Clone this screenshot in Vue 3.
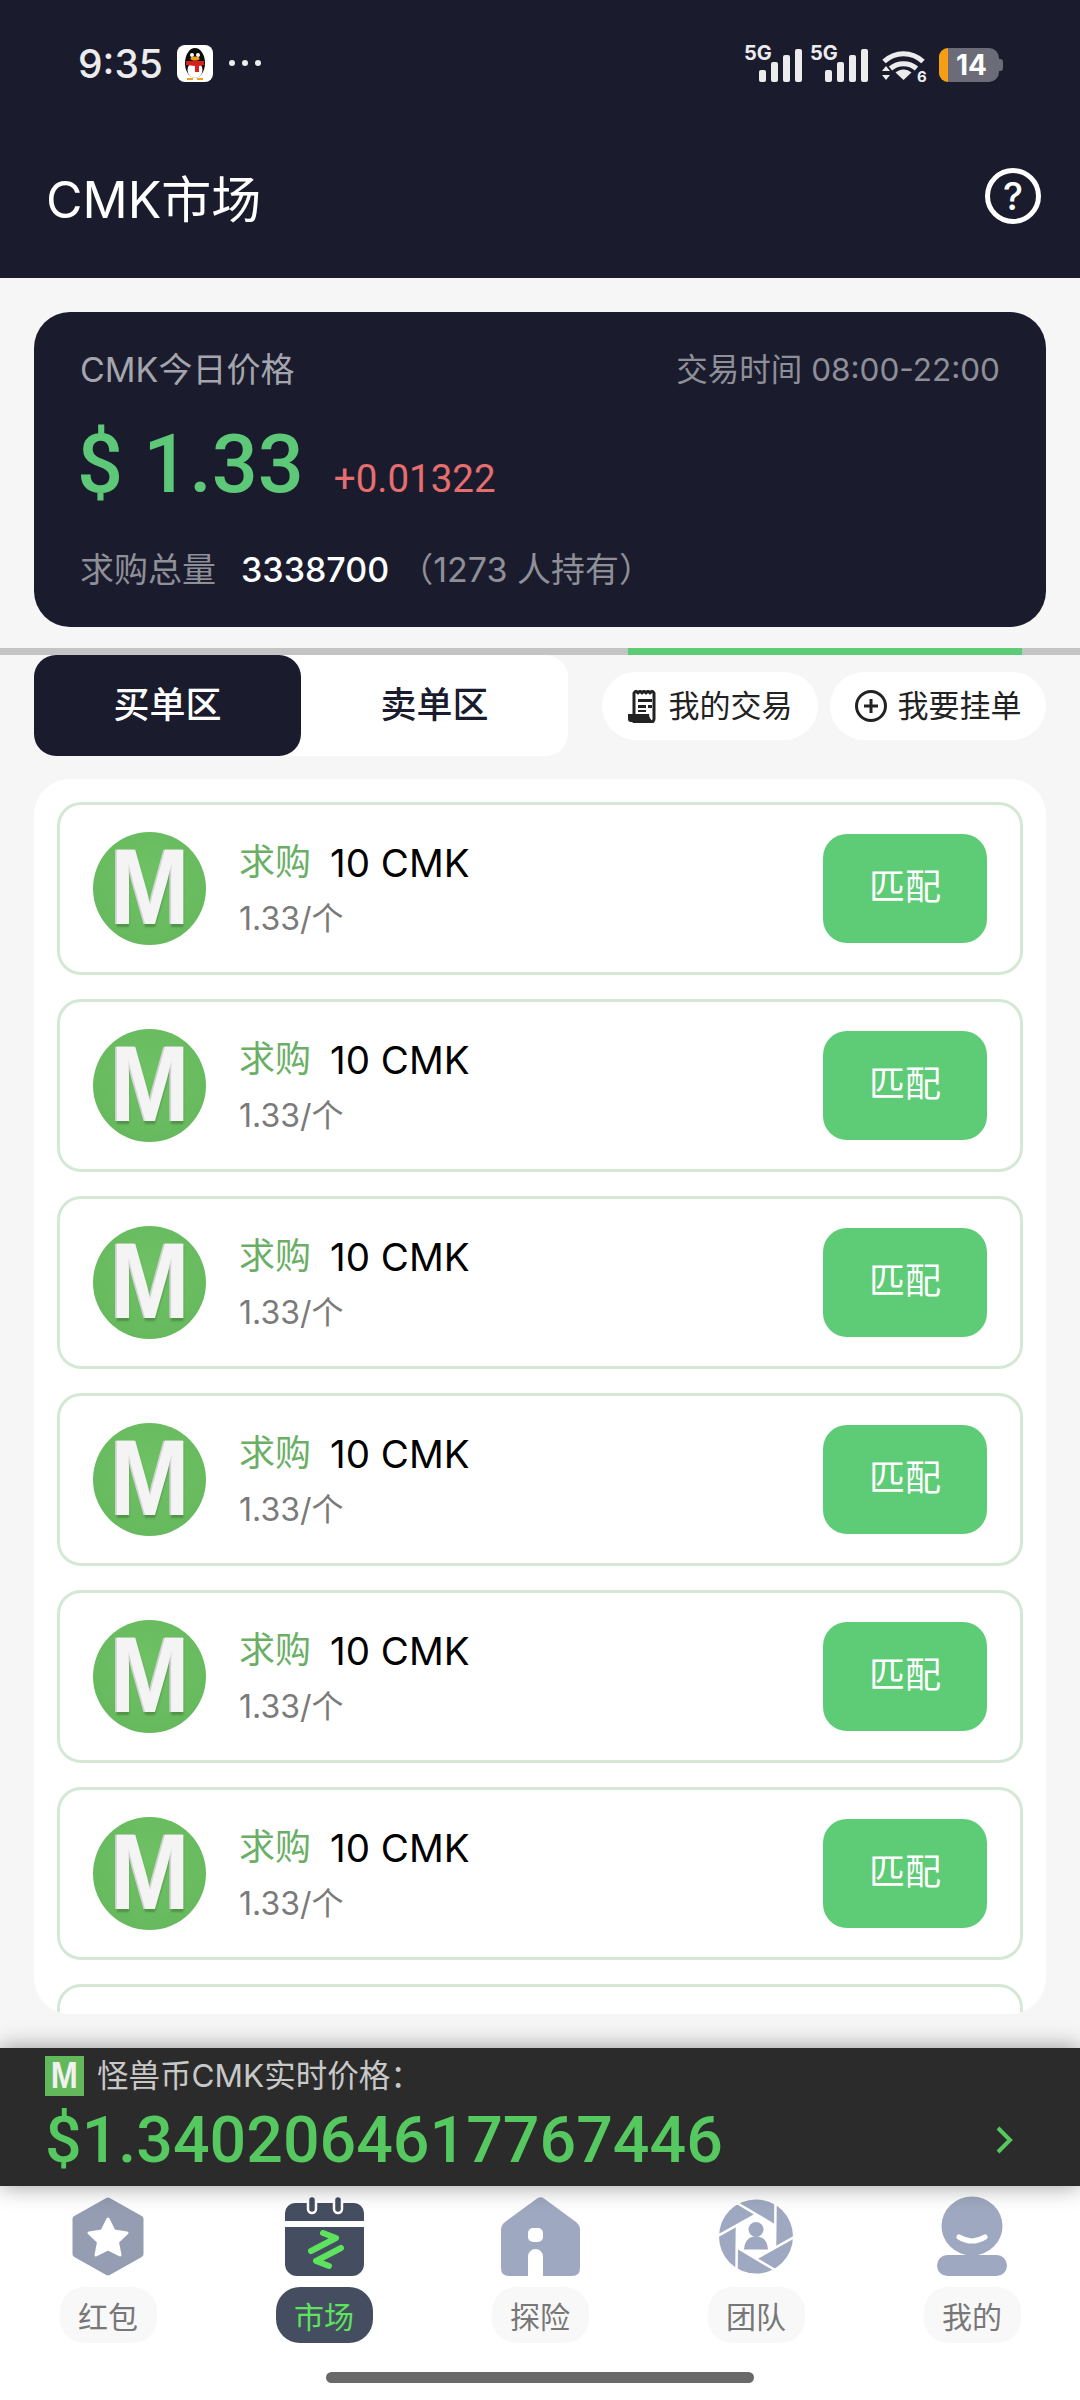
<script setup>
const orders = [1, 2, 3, 4, 5, 6, 7]
const tabs = [
  { key: 'packet', label: '红包' },
  { key: 'market', label: '市场', active: true },
  { key: 'explore', label: '探险' },
  { key: 'team', label: '团队' },
  { key: 'mine', label: '我的' },
]
const blades = [0, 60, 120, 180, 240, 300]
</script>

<template>
  <div class="page">
    <header class="header">
      <div class="status">
        <div class="status-left">
          <span class="time">9:35</span>
          <svg class="qq" viewBox="0 0 36 37">
            <rect width="36" height="37" rx="8" fill="#fff" />
            <ellipse cx="18" cy="18" rx="10" ry="15" fill="#0b0b0b" />
            <ellipse cx="18" cy="25" rx="7.500" ry="8" fill="#fff" />
            <circle cx="15" cy="10" r="2" fill="#fff" />
            <circle cx="21" cy="10" r="2" fill="#fff" />
            <ellipse cx="18" cy="13.500" rx="4.500" ry="2" fill="#f0a018" />
            <path d="M9 16h18v4l-5 1v6h-4v-6l-9-1z" fill="#d8201c" />
            <path d="M10 33h6v2h-6zM20 33h6v2h-6z" fill="#f0a018" />
          </svg>
          <span class="dots"><i></i><i></i><i></i></span>
        </div>
        <div class="status-right">
          <div v-for="n in 2" :key="n" class="signal">
            <span class="five-g">5G</span>
            <span class="bars"><i></i><i></i><i></i><i></i></span>
          </div>
          <svg class="wifi" viewBox="0 0 45 32">
            <path d="M3 11.500C14 1 31 1 42 11.500" fill="none" stroke="#ececec" stroke-width="5" />
            <path d="M9.500 18.500C17 12 28 12 35.500 18.500" fill="none" stroke="#ececec" stroke-width="5" />
            <path d="M14.500 22.500C19.500 18.500 25.500 18.500 30.500 22.500L22.500 30z" fill="#ececec" />
            <path d="M4 20l4-5 4 5zM4 24h8l-4 5z" fill="#ececec" transform="translate(-3 1)" />
            <text x="36" y="32" class="wifi-six">6</text>
          </svg>
          <div class="battery">
            <span class="battery-level"></span>
            <span class="battery-num">14</span>
            <span class="battery-cap"></span>
          </div>
        </div>
      </div>
      <div class="title-row">
        <h1 class="title">CMK市场</h1>
        <span class="help">?</span>
      </div>
    </header>

    <main class="content">
      <section class="price-card">
        <div class="price-top">
          <span>CMK今日价格</span>
          <span class="trade-time">交易时间 08:00-22:00</span>
        </div>
        <div class="price-main">
          <span class="price">$ 1.33</span>
          <span class="delta">+0.01322</span>
        </div>
        <div class="price-foot">
          <span>求购总量</span>
          <b>3338700</b>
          <span class="holders">（1273 人持有）</span>
        </div>
      </section>

      <div class="progress"><span class="progress-on"></span></div>

      <div class="actions">
        <div class="switch">
          <span class="switch-item on">买单区</span>
          <span class="switch-item">卖单区</span>
        </div>
        <div class="pills">
          <span class="pill">
            <svg class="pill-icon" viewBox="0 0 30 33">
              <path d="M6 3l2-2 2 2 2-2 2 2 2-2 2 2 2-2 2 2 2-2 2 2v26a3 3 0 0 1-3 3H6z" fill="none" stroke="#222" stroke-width="3" stroke-linejoin="round" />
              <path d="M10 9h14v3H10zM10 15h8v3h-8zM20 15h4v3h-4zM10 20h8v2h-8z" fill="#222" />
              <path d="M0 24h21c0 4 2 6 5 8H3a3 3 0 0 1-3-3z" fill="#222" />
            </svg>
            <span class="pill-text">我的交易</span>
          </span>
          <span class="pill">
            <svg class="pill-icon plus" viewBox="0 0 32 32">
              <circle cx="16" cy="16" r="14.500" fill="none" stroke="#222" stroke-width="3" />
              <path d="M16 9v14M9 16h14" stroke="#222" stroke-width="3" />
            </svg>
            <span class="pill-text">我要挂单</span>
          </span>
        </div>
      </div>

      <section class="list">
        <div v-for="o in orders" :key="o" class="order">
          <div class="avatar"><span v-if="o < 7" class="avatar-m">M</span></div>
          <template v-if="o < 7">
            <div class="order-info">
              <div class="order-line">
                <span class="order-type">求购</span>
                <span class="order-amount">10 CMK</span>
              </div>
              <div class="order-unit">1.33/个</div>
            </div>
            <span class="match">匹配</span>
          </template>
        </div>
      </section>
    </main>

    <section class="ticker">
      <div class="ticker-info">
        <div class="ticker-head">
          <span class="ticker-logo"><span class="ticker-m">M</span></span>
          <span>怪兽币CMK实时价格：</span>
        </div>
        <div class="ticker-price">$1.3402064617767446</div>
      </div>
      <svg class="chevron" viewBox="0 0 19 28">
        <path d="M3 2l12 12L3 26" fill="none" stroke="#55c860" stroke-width="4" />
      </svg>
    </section>

    <nav class="tabbar">
      <div class="tabs">
        <div v-for="t in tabs" :key="t.key" class="tab">
          <div class="tab-icon">
            <svg v-if="t.key === 'packet'" width="72" height="79" viewBox="0 0 72 79">
              <path d="M36 4L68 22V57L36 75L4 57V22Z" fill="#959db3" stroke="#959db3" stroke-width="7" stroke-linejoin="round" />
              <path d="M36 22L42 34L55 36L45.500 45L48 58L36 52L24 58L26.500 45L17 36L30 34Z" fill="#fff" stroke="#fff" stroke-width="3" stroke-linejoin="round" />
            </svg>
            <svg v-else-if="t.key === 'market'" width="79" height="79" viewBox="0 0 79 79">
              <path d="M10 6H69a10 10 0 0 1 10 10v8H0v-8A10 10 0 0 1 10 6z" fill="#454d60" />
              <path d="M0 30H79V67a12 12 0 0 1-12 12H12A12 12 0 0 1 0 67z" fill="#454d60" />
              <rect x="23" y="-1" width="8" height="17" rx="4" fill="#454d60" stroke="#fff" stroke-width="2.500" />
              <rect x="49" y="-1" width="8" height="17" rx="4" fill="#454d60" stroke="#fff" stroke-width="2.500" />
              <path d="M26 54L51 41L38 36M56 51L31 64L44 69" fill="none" stroke="#5de35d" stroke-width="6" stroke-linecap="round" stroke-linejoin="round" />
            </svg>
            <svg v-else-if="t.key === 'explore'" width="79" height="79" viewBox="0 0 79 79">
              <path d="M36 1.500Q39.500 -1 43 1.500L75 25Q79 28 79 33V71Q79 79 71 79H8Q0 79 0 71V33Q0 28 4 25Z" fill="#9ea8c0" />
              <rect x="27" y="31" width="15" height="14" rx="5" fill="#fff" />
              <path d="M27 79V59.500a7.500 7.500 0 0 1 15 0V79z" fill="#fff" />
            </svg>
            <svg v-else-if="t.key === 'team'" width="76" height="79" viewBox="-38 -39.500 76 79">
              <circle r="37" fill="#9ea8c0" />
              <polygon points="0,-22 19,-11 19,11 0,22 -19,11 -19,-11" fill="#fff" />
              <line v-for="b in blades" :key="b" x1="19" y1="-11" x2="-19" y2="-33.500" stroke="#fff" stroke-width="2.500" :transform="`rotate(${b})`" />
              <circle cy="-7" r="7.500" fill="#9ea8c0" />
              <path d="M-12 13Q-11 0 0 0Q11 0 12 13z" fill="#9ea8c0" />
            </svg>
            <svg v-else width="70" height="79" viewBox="0 0 70 79">
              <ellipse cx="35" cy="29" rx="30.500" ry="29.500" fill="#9ea8c0" />
              <rect x="0" y="58" width="70" height="21" rx="10.500" fill="#9ea8c0" />
              <path d="M22 40Q35 48 48 40" fill="none" stroke="#fff" stroke-width="5" stroke-linecap="round" />
            </svg>
          </div>
          <span class="tab-label" :class="{ on: t.active }">{{ t.label }}</span>
        </div>
      </div>
      <div class="home-bar"></div>
    </nav>
  </div>
</template>

<style scoped>
.page {
  width: 1080px;
  height: 2400px;
  display: flex;
  flex-direction: column;
  overflow: hidden;
  background: #f6f6f6;
  font-family: Inter, "Noto Sans CJK SC", sans-serif;
}

.header {
  height: 278px;
  flex: none;
  background: #1a1c2e;
  color: #fff;
  box-sizing: border-box;
}

.status {
  height: 126px;
  box-sizing: border-box;
  padding: 0 81px 0 78px;
  display: flex;
  justify-content: space-between;
  align-items: center;
}

.status-left {
  display: flex;
  align-items: center;
}

.time {
  width: 99px;
  font-size: 39px;
  font-weight: 500;
  color: #ececec;
}

.qq {
  width: 36px;
  height: 37px;
}

.dots {
  display: flex;
  gap: 7px;
  margin-left: 16px;
}

.dots i {
  width: 6px;
  height: 6px;
  border-radius: 50%;
  background: #ececec;
}

.status-right {
  display: flex;
  align-items: flex-end;
  height: 37px;
}

.signal {
  position: relative;
  width: 66px;
  height: 37px;
}

.five-g {
  position: absolute;
  left: 0;
  top: -4px;
  font-size: 20px;
  line-height: 24px;
  font-weight: 700;
  color: #ececec;
}

.bars {
  position: absolute;
  left: 15px;
  bottom: 0;
  display: flex;
  align-items: flex-end;
  gap: 5px;
}

.bars i {
  width: 7px;
  background: #ececec;
  border-radius: 2px;
}

.bars i:nth-child(1) { height: 12px; }
.bars i:nth-child(2) { height: 20px; }
.bars i:nth-child(3) { height: 27px; }
.bars i:nth-child(4) { height: 33px; }

.wifi {
  width: 45px;
  height: 32px;
  margin-left: 5px;
  overflow: visible;
}

.wifi-six {
  font-size: 15px;
  font-weight: 700;
  fill: #ececec;
}

.battery {
  position: relative;
  width: 60px;
  height: 34px;
  margin-left: 13px;
  background: #6c6c78;
  border-radius: 10px;
  display: flex;
  align-items: center;
  justify-content: center;
}

.battery-level {
  position: absolute;
  left: 0;
  top: 0;
  bottom: 0;
  width: 9px;
  background: #f59e12;
  border-radius: 10px 0 0 10px;
}

.battery-num {
  font-size: 28px;
  font-weight: 700;
  color: #fff;
  margin-left: 5px;
}

.battery-cap {
  position: absolute;
  right: -4px;
  top: 11px;
  width: 4px;
  height: 12px;
  background: #6c6c78;
  border-radius: 0 3px 3px 0;
}

.title-row {
  display: flex;
  justify-content: space-between;
  align-items: center;
  padding: 0 39px 0 46px;
  height: 146px;
}

.title {
  margin: 0 0 6px;
  font-size: 50px;
  font-weight: 400;
}

.help {
  width: 56px;
  height: 56px;
  margin-bottom: 6px;
  box-sizing: border-box;
  border: 5px solid #fff;
  border-radius: 50%;
  display: flex;
  align-items: center;
  justify-content: center;
  font-size: 38px;
  font-weight: 500;
}

.content {
  flex: 1;
  min-height: 0;
  box-sizing: border-box;
  padding-top: 34px;
  overflow: hidden;
}

.price-card {
  margin: 0 34px;
  height: 315px;
  box-sizing: border-box;
  padding: 36px 46px 0;
  background: #1a1c2e;
  border-radius: 36px;
  color: #a5a5ad;
}

.price-top {
  display: flex;
  justify-content: space-between;
  align-items: center;
  font-size: 34px;
  line-height: 44px;
}

.trade-time {
  font-size: 31.5px;
  color: #8f8f98;
}

.price-main {
  display: flex;
  align-items: baseline;
  gap: 30px;
  height: 94px;
  margin-top: 26px;
  margin-left: -3px;
  font-family: Roboto, sans-serif;
}

.price {
  font-size: 81px;
  line-height: 94px;
  font-weight: 500;
  color: #5cc878;
}

.delta {
  font-size: 38.500px;
  color: #e66e6e;
}

.price-foot {
  margin-top: 36px;
  font-size: 34px;
  line-height: 44px;
  display: flex;
  align-items: center;
  color: #8f8f98;
}

.price-foot b {
  margin-left: 25px;
  font-weight: 500;
  color: #fff;
}

.holders {
  margin-left: 10px;
}

.progress {
  margin-top: 21px;
  height: 7px;
  background: #c4c4c4;
  position: relative;
}

.progress-on {
  position: absolute;
  left: 628px;
  width: 394px;
  top: 0;
  bottom: 0;
  background: #5ecb76;
}

.actions {
  display: flex;
  justify-content: space-between;
  margin: 0 34px;
}

.switch {
  width: 534px;
  height: 101px;
  display: flex;
  background: #fff;
  border-radius: 22px;
}

.switch-item {
  flex: 1;
  display: flex;
  align-items: center;
  justify-content: center;
  padding-bottom: 7px;
  box-sizing: border-box;
  font-size: 36px;
  font-weight: 500;
  color: #1a1c2e;
  border-radius: 22px;
}

.switch-item.on {
  background: #1a1c2e;
  color: #fff;
}

.pills {
  display: flex;
  gap: 12px;
  margin-top: 17px;
}

.pill {
  width: 216px;
  height: 68px;
  display: flex;
  align-items: center;
  justify-content: center;
  gap: 11px;
  background: #fff;
  border-radius: 34px;
  font-size: 31px;
  color: #222;
}

.pill-text {
  margin-bottom: 5px;
}

.pill-icon {
  width: 30px;
  height: 33px;
  flex: none;
}

.pill-icon.plus {
  width: 32px;
  height: 32px;
}

.list {
  margin: 23px 34px 0;
  height: 1235px;
  box-sizing: border-box;
  padding: 23px 23px 0;
  background: #fff;
  border-radius: 36px;
  overflow: hidden;
  display: flex;
  flex-direction: column;
  gap: 24px;
}

.order {
  flex: none;
  height: 173px;
  box-sizing: border-box;
  border: 3px solid #d5e8d5;
  border-radius: 24px;
  display: flex;
  align-items: center;
  padding: 0 33px;
}

.avatar {
  width: 113px;
  height: 113px;
  flex: none;
  border-radius: 50%;
  background: radial-gradient(circle at 50% 40%, #6fc264, #63b65a);
  display: flex;
  align-items: center;
  justify-content: center;
}

.avatar-m {
  font-family: "Liberation Sans", sans-serif;
  font-weight: 700;
  font-size: 108px;
  line-height: 108px;
  color: #f5f4f4;
  transform: translateY(-2px) scaleX(0.88);
  text-shadow: -2px 0 0 #d4d2d6, 0 3px 2px rgba(60, 110, 50, 0.5);
}

.order-info {
  flex: 1;
  margin-left: 33px;
}

.order-line {
  display: flex;
  align-items: center;
  height: 48px;
}

.order-type {
  font-size: 36px;
  line-height: 48px;
  color: #6aaf65;
  transform: translateY(-1px);
}

.order-amount {
  margin-left: 19px;
  font-size: 38.500px;
  color: #000;
}

.order-unit {
  margin-top: 12px;
  font-size: 32px;
  line-height: 40px;
  color: #7a7a7a;
}

.match {
  width: 164px;
  height: 109px;
  flex: none;
  box-sizing: border-box;
  padding-bottom: 10px;
  background: #5ecb76;
  border-radius: 24px;
  color: #fff;
  font-size: 36px;
  display: flex;
  align-items: center;
  justify-content: center;
}

.ticker {
  position: relative;
  z-index: 1;
  flex: none;
  height: 138px;
  box-sizing: border-box;
  background: #2b2b2b;
  box-shadow: 0 0 22px rgba(0, 0, 0, 0.4);
  display: flex;
  align-items: center;
  justify-content: space-between;
  padding: 0 66px 0 45px;
}

.ticker-head {
  display: flex;
  align-items: center;
  gap: 13px;
  font-size: 31.500px;
  line-height: 40px;
  color: #c8c8c8;
  height: 40px;
}

.ticker-logo {
  width: 39px;
  height: 40px;
  background: #62b85a;
  display: flex;
  align-items: center;
  justify-content: center;
  font-family: "Liberation Sans", sans-serif;
  font-weight: 700;
  font-size: 37px;
  color: #f2f1f1;
}

.ticker-m {
  transform: scaleX(0.88);
}

.ticker-price {
  margin-top: 5px;
  font-family: Roboto, sans-serif;
  font-size: 64.500px;
  line-height: 78px;
  font-weight: 500;
  color: #55c860;
}

.chevron {
  width: 19px;
  height: 28px;
  margin-top: 46px;
}

.tabbar {
  flex: none;
  height: 214px;
  background: #fff;
  position: relative;
  z-index: 0;
}

.tabs {
  display: flex;
  padding-top: 11px;
}

.tab {
  flex: none;
  width: 216px;
  display: flex;
  flex-direction: column;
  align-items: center;
}

.tab-icon {
  height: 79px;
  display: flex;
}

.tab-icon svg {
  overflow: visible;
}

.tab-label {
  margin-top: 11px;
  width: 97px;
  height: 56px;
  border-radius: 24px;
  background: #f8f8f8;
  color: #777;
  font-size: 30px;
  display: flex;
  align-items: center;
  justify-content: center;
}

.tab-label.on {
  background: #454d60;
  color: #5de35d;
}

.home-bar {
  width: 428px;
  height: 11px;
  margin: 29px auto 0;
  border-radius: 6px;
  background: #696969;
}
</style>

<style>
body {
  margin: 0;
  background: #f6f6f6;
}
</style>
